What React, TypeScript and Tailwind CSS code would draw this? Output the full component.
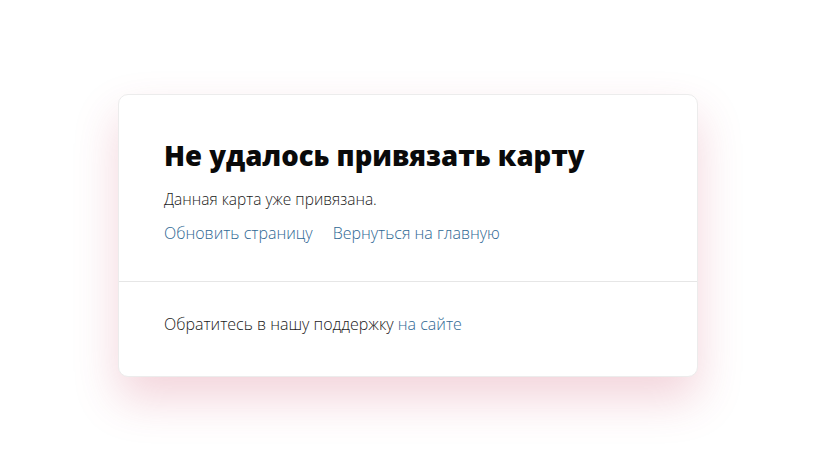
export default function App() {
  return (
    <div className="min-h-[472px] w-[825px] bg-white pt-[94px] font-['Open_Sans',sans-serif]">
      <div className="ml-[118px] w-[580px] rounded-[10px] border border-[#ececec] bg-white shadow-[0_22px_45px_rgba(200,60,90,0.22)]">
        <div className="px-[45px] pt-[44px] pb-[37px]">
          <h1 className="text-[27.5px] font-extrabold leading-[34px] text-[#0a0a0a]">
            Не удалось привязать карту
          </h1>
          <p className="mt-[16px] text-[15.5px] font-light leading-[20px] text-[#1a1a1a]">
            Данная карта уже привязана.
          </p>
          <div className="mt-[13px] flex gap-[20px] text-[16px] font-light leading-[22px] text-[#2f6894]">
            <a href="#">Обновить страницу</a>
            <a href="#">Вернуться на главную</a>
          </div>
        </div>
        <div className="border-t border-[#e6e6e6] px-[45px] pt-[30px] pb-[40px] text-[16px] font-light leading-[24px] text-[#1a1a1a]">
          Обратитесь в нашу поддержку <a href="#" className="text-[#2f6894]">на сайте</a>
        </div>
      </div>
    </div>
  )
}
